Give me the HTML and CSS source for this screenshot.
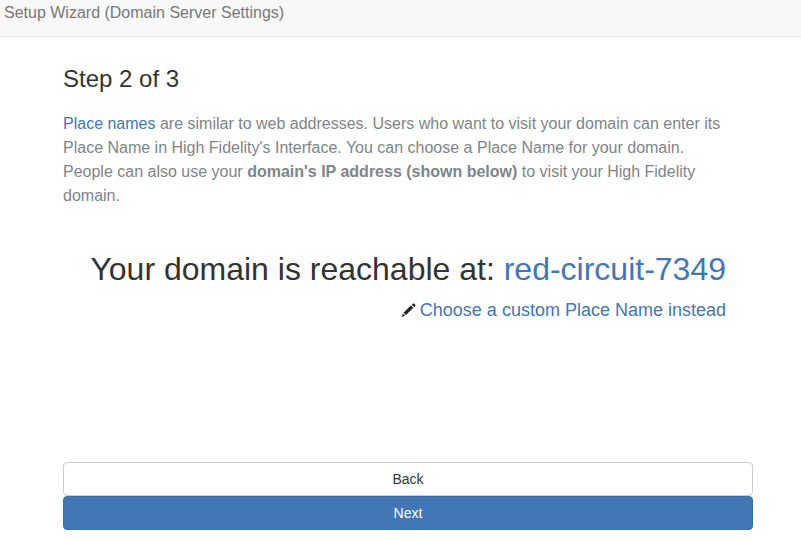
FILE: index.html
```html
<!DOCTYPE html>
<html lang="en">
<head>
<meta charset="utf-8">
<title>Setup Wizard</title>
<link rel="stylesheet" href="styles.css">
</head>
<body>
<nav class="navbar">Setup Wizard (Domain Server Settings)</nav>
<main class="step">
  <h1 class="step-title">Step 2 of 3</h1>
  <p class="intro"><a href="#">Place names</a> are similar to web addresses. Users who want to visit your domain can enter its<br>Place Name in High Fidelity's Interface. You can choose a Place Name for your domain.<br>People can also use your <b>domain's IP address (shown below)</b> to visit your High Fidelity<br>domain.</p>
  <section class="place">
    <h2 class="address">Your domain is reachable at: <a href="#">red-circuit-7349</a></h2>
    <div class="custom">
      <svg class="pencil" viewBox="0 0 16 16" aria-hidden="true"><path d="M1.700 15l1.100-3.500 2.400 2.300zM3.500 10.700l7.400-7.300 2.400 2.400-7.300 7.300zM11.700 2.700l1.200-1.100q.5-.4 1 0l1.500 1.400q.4.500 0 1l-1.300 1.100z"/></svg>
      <a href="#">Choose a custom Place Name instead</a>
    </div>
  </section>
  <div class="actions">
    <button class="btn">Back</button>
    <button class="btn btn-primary">Next</button>
  </div>
</main>
</body>
</html>
```
FILE: styles.css
```css
* { box-sizing: border-box; }
body { margin: 0; height: 541px; overflow: hidden; background: #fff; color: #333; font-family: "Liberation Sans", Arial, sans-serif; }
a { color: #4376b5; text-decoration: none; }
.navbar { height: 37px; padding: 2px 4px; border-bottom: 1px solid #e7e7e7; background: #f8f8f8; color: #777; font-size: 16px; line-height: 22px; }
.step { width: 690px; margin-left: 63px; }
.step-title { margin: 29px 0 0; font-size: 24px; font-weight: 400; line-height: 26px; }
.intro { margin: 20px 0 0; color: #7c858b; font-size: 16px; line-height: 24px; white-space: nowrap; }
.place { width: 663px; margin-top: 43px; text-align: right; }
.address { margin: 0; font-size: 32px; font-weight: 400; line-height: 36px; white-space: nowrap; }
.custom { display: flex; justify-content: flex-end; align-items: center; gap: 4px; margin-top: 11px; font-size: 18px; line-height: 24px; }
.pencil { width: 16px; height: 16px; fill: #222; }
.actions { display: flex; flex-direction: column; margin-top: 140px; }
.btn { height: 34px; padding: 0; border: 1px solid #ccc; border-radius: 4px; background: #fff; color: #333; font: 14px/20px "Liberation Sans", Arial, sans-serif; }
.btn-primary { border-color: #3d6da8; background: #4376b5; color: #fff; }
```
